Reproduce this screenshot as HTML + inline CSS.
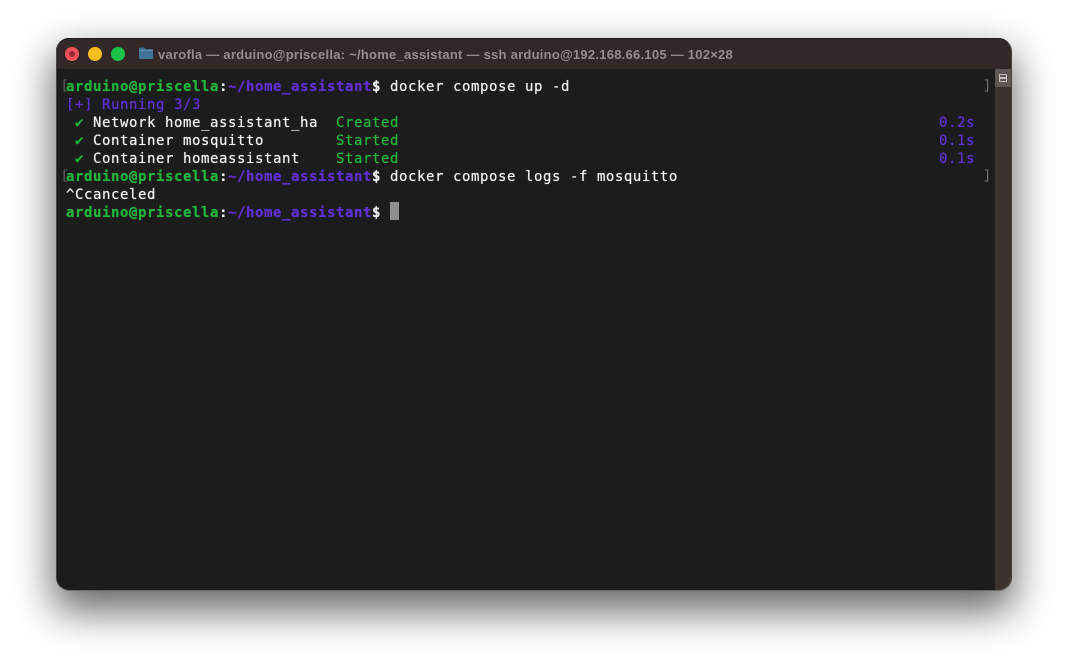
<!DOCTYPE html>
<html>
<head>
<meta charset="utf-8">
<style>
html,body{margin:0;padding:0;width:1067px;height:664px;background:#fff;overflow:hidden}
#win{position:absolute;left:56px;top:38px;width:955px;height:552px;border-radius:13px;background:#1c1c1c;box-shadow:0 18px 40px 3px rgba(0,0,0,.6);overflow:hidden}
#edge{position:absolute;left:55.500px;top:37.500px;width:956px;height:553px;border-radius:13.500px;box-sizing:border-box;border:1px solid #6a6a6a;border-top-color:#222;border-left-color:#444;border-right-color:#444;pointer-events:none}
#bar{position:absolute;left:0;top:0;width:955px;height:31px;background:#322828}
.dot{position:absolute;top:9px;width:14px;height:14px;border-radius:50%}
#title{position:absolute;left:102px;top:8px;font:bold 13px/17px "Liberation Sans",sans-serif;color:#958d8c;white-space:pre;letter-spacing:.25px;filter:blur(.3px)}
#scroll{position:absolute;left:939px;top:31px;width:16px;height:521px;background:#3c3230}
#sbtn{position:absolute;left:939px;top:31px;width:16px;height:18px;background:#5e5654}
.l{position:absolute;left:10px;font:14px/18px "DejaVu Sans Mono","Liberation Mono",monospace;letter-spacing:.57px;color:#f2f2f2;white-space:pre;height:18px;filter:blur(.35px);text-shadow:0 0 .6px currentColor;margin-top:1px}
.g{color:#1fb53c;font-weight:bold}
.p{color:#5f30cf;font-weight:bold}
.w{font-weight:bold;color:#f0f0f0}
.pl{color:#5f30cf}
.gl{color:#1fb53c}
.t{position:absolute;left:5px;font:13px/18px "Liberation Mono",monospace;color:#666}
.r{position:absolute;left:927px;font:13px/18px "Liberation Mono",monospace;color:#777}
.ts{position:absolute;left:883px;font:14px/18px "DejaVu Sans Mono","Liberation Mono",monospace;letter-spacing:.57px;color:#5f30cf;filter:blur(.35px);text-shadow:0 0 .6px currentColor;margin-top:1px}
</style>
</head>
<body>
<div id="win">
  <div id="bar"></div>
  <div class="dot" style="left:9px;background:#f4505c"></div>
  <div style="position:absolute;left:13px;top:13px;width:6px;height:6px;border-radius:50%;background:#9a2a35"></div>
  <div class="dot" style="left:32px;background:#f9bd1d"></div>
  <div class="dot" style="left:55px;background:#1cc14a"></div>
  <svg style="position:absolute;left:83px;top:9px" width="14" height="13" viewBox="0 0 14 13"><path d="M0 1.500Q0 .5 1 .5H5L6.300 2H13Q14 2 14 3V11Q14 12 13 12H1Q0 12 0 11Z" fill="#3f7398"/><rect x="0" y="3" width="14" height="1" fill="#5c8db0"/></svg>
  <div id="title">varofla — arduino@priscella: ~/home_assistant — ssh arduino@192.168.66.105 — 102×28</div>

  <div class="t" style="top:39px">[</div>
  <div class="l" style="top:39px"><span class="g">arduino@priscella</span><span class="w">:</span><span class="p">~/home_assistant</span><span class="w">$</span> docker compose up -d</div>
  <div class="r" style="top:39px">]</div>
  <div class="l pl" style="top:57px">[+] Running 3/3</div>
  <div class="l" style="top:75px"> <span class="gl">✔</span> Network home_assistant_ha  <span class="gl">Created</span></div>
  <div class="ts" style="top:75px">0.2s</div>
  <div class="l" style="top:93px"> <span class="gl">✔</span> Container mosquitto        <span class="gl">Started</span></div>
  <div class="ts" style="top:93px">0.1s</div>
  <div class="l" style="top:111px"> <span class="gl">✔</span> Container homeassistant    <span class="gl">Started</span></div>
  <div class="ts" style="top:111px">0.1s</div>
  <div class="t" style="top:129px">[</div>
  <div class="l" style="top:129px"><span class="g">arduino@priscella</span><span class="w">:</span><span class="p">~/home_assistant</span><span class="w">$</span> docker compose logs -f mosquitto</div>
  <div class="r" style="top:129px">]</div>
  <div class="l" style="top:147px">^Ccanceled</div>
  <div class="l" style="top:165px"><span class="g">arduino@priscella</span><span class="w">:</span><span class="p">~/home_assistant</span><span class="w">$</span></div>
  <div style="position:absolute;left:334px;top:164px;width:9px;height:18px;background:#8e8e8e"></div>

  <div id="scroll"></div>
  <div id="sbtn"></div>
  <svg style="position:absolute;left:943px;top:36px" width="8" height="8" viewBox="0 0 8 8"><rect x=".5" y=".5" width="7" height="7" fill="none" stroke="#c4bebc"/><rect x=".5" y="3" width="7" height="2" fill="#c4bebc"/></svg>
</div>
<div id="edge"></div>
</body>
</html>
